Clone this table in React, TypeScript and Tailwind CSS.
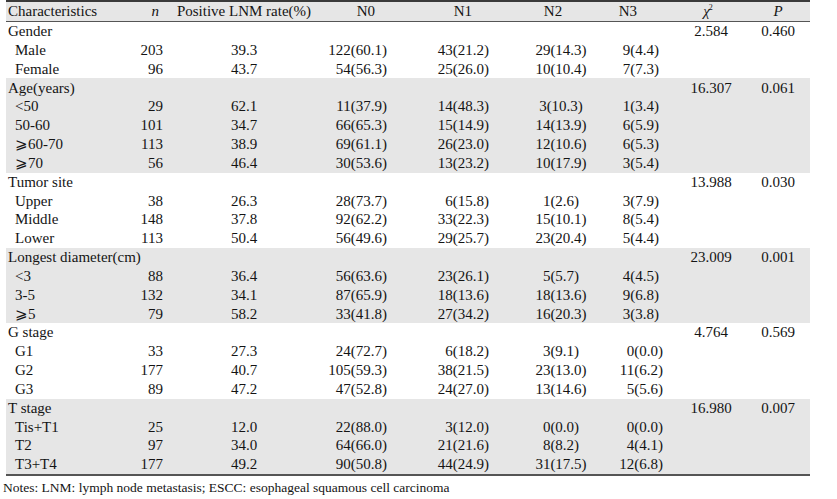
import React from "react";

type Row = { label: string; n: string; rate: string; n0: string; n1: string; n2: string; n3: string };

type Group = {
  title: string;
  chi: string;
  p: string;
  gray: boolean;
  late: boolean;
  rows: Row[];
};

const groups: Group[] = [
  {
    title: "Gender",
    chi: "2.584",
    p: "0.460",
    gray: false,
    late: false,
    rows: [
      { label: "Male", n: "203", rate: "39.3", n0: "122(60.1)", n1: "43(21.2)", n2: "29(14.3)", n3: "9(4.4)" },
      { label: "Female", n: "96", rate: "43.7", n0: "54(56.3)", n1: "25(26.0)", n2: "10(10.4)", n3: "7(7.3)" },
    ],
  },
  {
    title: "Age(years)",
    chi: "16.307",
    p: "0.061",
    gray: true,
    late: false,
    rows: [
      { label: "<50", n: "29", rate: "62.1", n0: "11(37.9)", n1: "14(48.3)", n2: "3(10.3)", n3: "1(3.4)" },
      { label: "50-60", n: "101", rate: "34.7", n0: "66(65.3)", n1: "15(14.9)", n2: "14(13.9)", n3: "6(5.9)" },
      { label: "⩾60-70", n: "113", rate: "38.9", n0: "69(61.1)", n1: "26(23.0)", n2: "12(10.6)", n3: "6(5.3)" },
      { label: "⩾70", n: "56", rate: "46.4", n0: "30(53.6)", n1: "13(23.2)", n2: "10(17.9)", n3: "3(5.4)" },
    ],
  },
  {
    title: "Tumor site",
    chi: "13.988",
    p: "0.030",
    gray: false,
    late: false,
    rows: [
      { label: "Upper", n: "38", rate: "26.3", n0: "28(73.7)", n1: "6(15.8)", n2: "1(2.6)", n3: "3(7.9)" },
      { label: "Middle", n: "148", rate: "37.8", n0: "92(62.2)", n1: "33(22.3)", n2: "15(10.1)", n3: "8(5.4)" },
      { label: "Lower", n: "113", rate: "50.4", n0: "56(49.6)", n1: "29(25.7)", n2: "23(20.4)", n3: "5(4.4)" },
    ],
  },
  {
    title: "Longest diameter(cm)",
    chi: "23.009",
    p: "0.001",
    gray: true,
    late: false,
    rows: [
      { label: "<3", n: "88", rate: "36.4", n0: "56(63.6)", n1: "23(26.1)", n2: "5(5.7)", n3: "4(4.5)" },
      { label: "3-5", n: "132", rate: "34.1", n0: "87(65.9)", n1: "18(13.6)", n2: "18(13.6)", n3: "9(6.8)" },
      { label: "⩾5", n: "79", rate: "58.2", n0: "33(41.8)", n1: "27(34.2)", n2: "16(20.3)", n3: "3(3.8)" },
    ],
  },
  {
    title: "G stage",
    chi: "4.764",
    p: "0.569",
    gray: false,
    late: true,
    rows: [
      { label: "G1", n: "33", rate: "27.3", n0: "24(72.7)", n1: "6(18.2)", n2: "3(9.1)", n3: "0(0.0)" },
      { label: "G2", n: "177", rate: "40.7", n0: "105(59.3)", n1: "38(21.5)", n2: "23(13.0)", n3: "11(6.2)" },
      { label: "G3", n: "89", rate: "47.2", n0: "47(52.8)", n1: "24(27.0)", n2: "13(14.6)", n3: "5(5.6)" },
    ],
  },
  {
    title: "T stage",
    chi: "16.980",
    p: "0.007",
    gray: true,
    late: true,
    rows: [
      { label: "Tis+T1", n: "25", rate: "12.0", n0: "22(88.0)", n1: "3(12.0)", n2: "0(0.0)", n3: "0(0.0)" },
      { label: "T2", n: "97", rate: "34.0", n0: "64(66.0)", n1: "21(21.6)", n2: "8(8.2)", n3: "4(4.1)" },
      { label: "T3+T4", n: "177", rate: "49.2", n0: "90(50.8)", n1: "44(24.9)", n2: "31(17.5)", n3: "12(6.8)" },
    ],
  },
];

const rowCls = "flex h-[18.84px] items-center whitespace-nowrap";

const GroupBlock = ({ g }: { g: Group }) => {
  return (
    <div className={g.gray ? "bg-[#e6e6e6]" : "bg-white"}>
      <div className={rowCls}>
        <div className="w-[114px] pl-[2px]">{g.title}</div>
        <div className="w-[43px]"></div>
        <div className="w-[162px]"></div>
        <div className="w-[62px]"></div>
        <div className="w-[102px]"></div>
        <div className="w-[111px]"></div>
        <div className="w-[70px]"></div>
        <div className="w-[82px] text-center">{g.chi}</div>
        <div className="w-[52px] text-center">{g.p}</div>
      </div>
      {g.rows.map((r) => (
        <div key={r.label} className={rowCls}>
          <div className="w-[114px] pl-[9px]">{r.label}</div>
          <div className="w-[43px] text-right">{r.n}</div>
          <div className="w-[162px] text-center">{r.rate}</div>
          <div className="w-[62px] text-right">{r.n0}</div>
          <div className="w-[102px] text-right">{r.n1}</div>
          <div className="w-[111px] pl-[33px] text-center">{r.n2}</div>
          <div className={"w-[70px] text-right " + (g.late ? "pr-[7px]" : "pr-[11px]")}>{r.n3}</div>
          <div className="w-[82px]"></div>
          <div className="w-[52px]"></div>
        </div>
      ))}
    </div>
  );
};

export default function App() {
  return (
    <div className="w-[837px] h-[499px] bg-white text-[#141414] text-[15px] font-['Liberation_Serif','Times_New_Roman',serif]">
      <div className="ml-[6px] w-[804px] border-t-2 border-b-2 border-t-[#3a3a3a] border-b-[#555]">
        <div className="flex h-[20px] items-center whitespace-nowrap bg-[#e6e6e6] border-b border-[#555]">
          <div className="w-[114px] pl-[2px]">Characteristics</div>
          <div className="w-[43px] text-right pr-[4px] italic">n</div>
          <div className="w-[162px] text-center">Positive LNM rate(%)</div>
          <div className="w-[62px] text-right pr-[12px]">N0</div>
          <div className="w-[102px] text-right pr-[17px]">N1</div>
          <div className="w-[111px] pl-[17px] text-center">N2</div>
          <div className="w-[70px] text-right pr-[33px]">N3</div>
          <div className="w-[82px] h-full flex items-center justify-center pr-[6px]">
            <span className="italic">χ</span>
            <span className="self-start mt-[2px] -ml-[1px] text-[8px] leading-[8px]">2</span>
          </div>
          <div className="w-[52px] text-center italic">P</div>
        </div>
        {groups.map((g) => (
          <GroupBlock key={g.title} g={g} />
        ))}
      </div>
      <div className="pl-[3px] pt-[2px] text-[13.5px] whitespace-nowrap">
        Notes: LNM: lymph node metastasis; ESCC: esophageal squamous cell carcinoma
      </div>
    </div>
  );
}
